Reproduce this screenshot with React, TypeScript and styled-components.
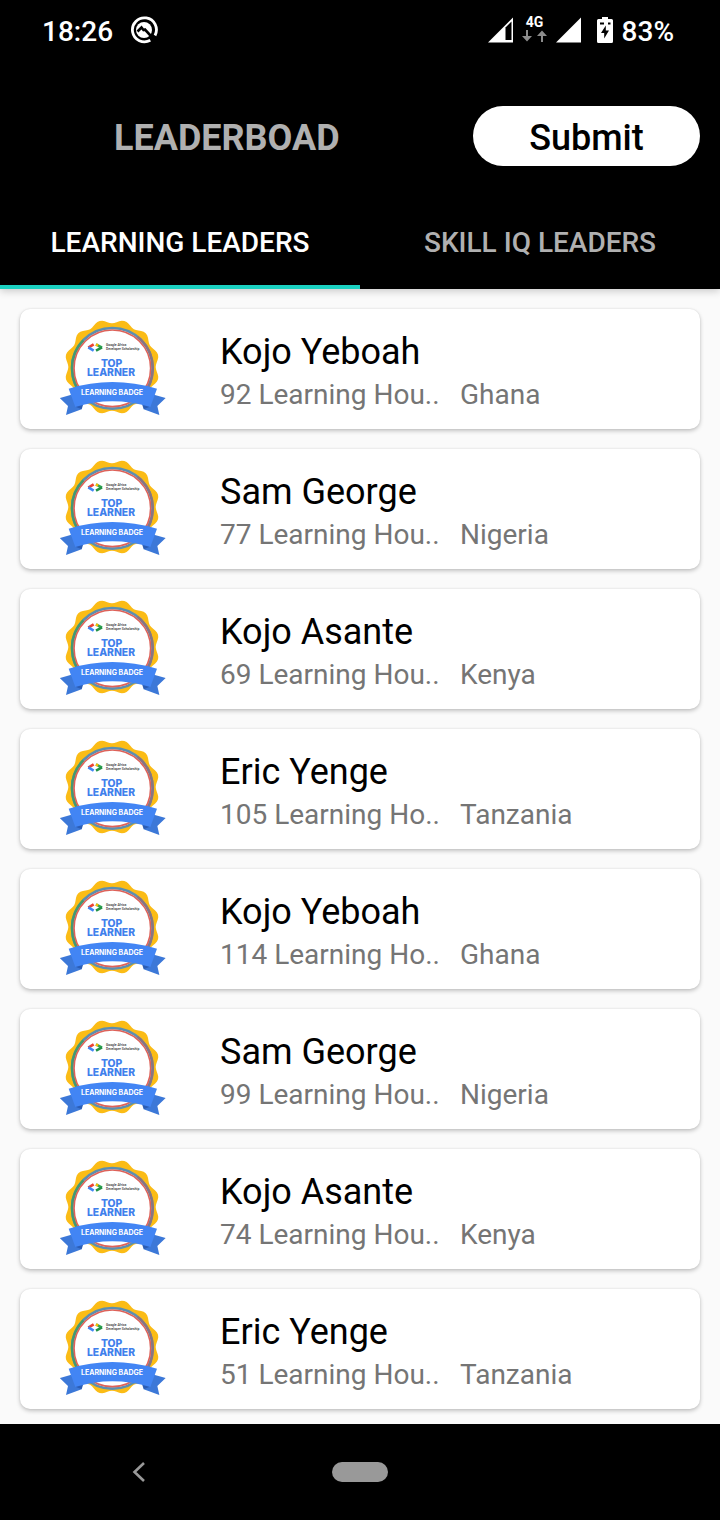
import React, { useState } from "react";
import styled, { createGlobalStyle } from "styled-components";

const GlobalStyle = createGlobalStyle`
  *, *::before, *::after { box-sizing: border-box; }
  body { margin: 0; background: #000; font-family: Roboto, "Liberation Sans", sans-serif; }
  button { font-family: inherit; border: 0; padding: 0; background: none; cursor: pointer; }
`;

const Screen = styled.div`
  min-height: 100vh;
  display: flex;
  flex-direction: column;
  background: #fafafa;
`;

const StatusBar = styled.div`
  display: flex;
  align-items: center;
  justify-content: space-between;
  height: 60px;
  padding: 0 46px 0 42px;
  background: #000;
  color: #fff;
`;

const StatusText = styled.span`
  padding-top: 4px;
  font-size: 28px;
  line-height: 32px;
  font-weight: 500;
`;

const StatusGroup = styled.div<{ $gap: number }>`
  display: flex;
  align-items: center;
  gap: ${({ $gap }) => $gap}px;
`;

const Network = styled.div`
  display: flex;
  flex-direction: column;
  align-items: center;
  width: 26px;
  padding-bottom: 4px;
  font-size: 14px;
  line-height: 16px;
  font-weight: 700;
`;

const BatteryLevel = styled.div`
  display: flex;
  align-items: center;
  gap: 9px;
  margin-left: 7px;
`;

const Header = styled.header`
  position: relative;
  background: #000;
  box-shadow: 0 2px 8px rgba(0, 0, 0, 0.2);
`;

const Toolbar = styled.div`
  display: flex;
  align-items: center;
  justify-content: space-between;
  height: 136px;
  padding: 16px 20px 0 114px;
`;

const Title = styled.h1`
  margin: 0;
  padding-top: 4px;
  color: #b0b0b0;
  font-size: 36px;
  line-height: 40px;
  font-weight: 700;
`;

const SubmitButton = styled.button`
  width: 227px;
  height: 60px;
  padding-top: 4px;
  border-radius: 30px;
  background: #fff;
  color: #000;
  font-size: 36px;
  line-height: 40px;
  font-weight: 500;
`;

const Tabs = styled.div`
  display: flex;
`;

const Tab = styled.button<{ $active: boolean }>`
  flex: 1;
  height: 93px;
  padding-top: 4px;
  border-bottom: 4px solid ${({ $active }) => ($active ? "#1bd1c1" : "#000")};
  color: ${({ $active }) => ($active ? "#fff" : "#b0b0b0")};
  font-size: 28px;
  line-height: 32px;
  font-weight: 500;
`;

const List = styled.ul`
  flex: 1;
  display: flex;
  flex-direction: column;
  gap: 20px;
  margin: 0;
  padding: 20px 20px 15px;
  list-style: none;
`;

const Card = styled.li`
  display: flex;
  align-items: center;
  gap: 54px;
  height: 120px;
  padding-left: 40px;
  border-radius: 10px;
  background: #fff;
  box-shadow: 0 2px 4px rgba(0, 0, 0, 0.22), 0 0 2px rgba(0, 0, 0, 0.1);
`;

const BadgeArt = styled.svg`
  flex: none;
  width: 106px;
  height: 98px;
  padding-bottom: 2px;
`;

const Info = styled.div`
  flex: 1;
  min-width: 0;
  padding-top: 4px;
`;

const Name = styled.h2`
  margin: 0;
  color: #000;
  font-size: 36px;
  line-height: 48px;
  font-weight: 400;
`;

const Details = styled.div`
  display: grid;
  grid-template-columns: 240px 1fr;
  color: #757575;
  font-size: 28px;
  line-height: 38px;
`;

const NavBar = styled.nav`
  display: grid;
  grid-template-columns: 1fr 56px 1fr;
  align-items: center;
  height: 96px;
  background: #000;
`;

const BackButton = styled.button`
  display: flex;
  justify-self: center;
  padding-right: 54px;
  box-sizing: content-box;
`;

const HomeButton = styled.button`
  height: 20px;
  border-radius: 10px;
  background: #999;
`;

const LOBES = 12;

function scallop(cx: number, cy: number, radius: number, depth: number) {
  const points: string[] = [];
  for (let deg = 0; deg < 360; deg += 3) {
    const a = (deg * Math.PI) / 180;
    const r = radius - depth * Math.cos(LOBES * a);
    points.push(`${(cx + r * Math.cos(a)).toFixed(1)},${(cy + r * Math.sin(a)).toFixed(1)}`);
  }
  return points.join(" ");
}

const SCALLOP = scallop(186, 171, 137, 6);

const Badge = () => (
  <BadgeArt viewBox="30 30 318 288" role="img" aria-label="Top learner badge">
    <polygon points={SCALLOP} fill="#fbbc16" />
    <circle cx="187" cy="175" r="121" fill="#fff" stroke="#5b8fb0" strokeWidth="8" />
    <path d="M116 272A121 121 0 0 1 100 91" fill="none" stroke="#429a72" strokeWidth="8" />
    <circle cx="187" cy="175" r="115" fill="none" stroke="#de6259" strokeWidth="5" />
    <path d="M262 80A121 121 0 0 1 262 270" fill="none" stroke="#8b7480" strokeWidth="7" />
    <g fill="none" strokeWidth="8">
      <path d="M131 103L115 113" stroke="#ea4335" />
      <path d="M115 112L131 122" stroke="#4285f4" />
      <path d="M138 103L156 113" stroke="#34a853" />
      <path d="M138 122L156 112" stroke="#229348" />
      <path d="M138 103L144 107" stroke="#fbbc04" />
    </g>
    <g fontFamily="Roboto, sans-serif" fill="#333" fontSize="10" fontWeight="500">
      <text x="168" y="109">Google Africa</text>
      <text x="168" y="121">Developer Scholarship</text>
    </g>
    <g
      fontFamily="Inter, sans-serif"
      fill="#3f80ec"
      fontSize="31"
      fontWeight="800"
      textAnchor="middle"
    >
      <text x="185" y="171">TOP</text>
      <text x="183" y="199">LEARNER</text>
    </g>
    <path d="M29 264L64 254L95 298L48 315L54 288Z" fill="#3c78d8" />
    <path d="M347 264L312 254L281 298L328 315L322 288Z" fill="#3c78d8" />
    <path d="M76 290L102 276L95 298Z" fill="#2b5db5" />
    <path d="M300 290L274 276L281 298Z" fill="#2b5db5" />
    <path d="M56 236Q186 196 321 236L301 291Q186 256 76 291Z" fill="#4285f4" />
    <text
      x="186"
      y="254"
      fill="#fff"
      fontFamily="Inter, sans-serif"
      fontSize="21"
      fontWeight="700"
      textAnchor="middle"
    >
      LEARNING BADGE
    </text>
  </BadgeArt>
);

const DebugIcon = () => (
  <svg width="28" height="28" viewBox="0 0 28 28" aria-hidden="true">
    <path d="M20.300 24.300A12 12 0 1 1 25 19.500" fill="none" stroke="#fff" strokeWidth="2.800" />
    <circle cx="14" cy="14" r="8" fill="#fff" />
    <path d="M7.500 15.500L11.500 11.500L13.500 14L15 13.500L25.500 25" fill="none" stroke="#000" strokeWidth="2.600" />
  </svg>
);

const SignalIcon = ({ partial = false }: { partial?: boolean }) => (
  <svg width="26" height="26" viewBox="0 0 26 26" aria-hidden="true">
    <path d="M0 25.500L25 0.500V25.500Z" fill="#fff" />
    {partial && <path d="M17.500 10.500L23.500 4.500V23H17.500Z" fill="#000" />}
  </svg>
);

const DataArrows = () => (
  <svg width="26" height="13" viewBox="0 0 26 13" fill="none" stroke="#8c8c8c" strokeWidth="2" aria-hidden="true">
    <path d="M5 0V9M20 12V3" />
    <path d="M0 6H10L5 11.500ZM15 6H25L20 0.500Z" fill="#8c8c8c" stroke="none" />
  </svg>
);

const BatteryIcon = () => (
  <svg width="16" height="26" viewBox="0 0 16 26" aria-hidden="true">
    <path d="M5 0H11V2H14.500Q16 2 16 3.500V24.500Q16 26 14.500 26H1.500Q0 26 0 24.500V3.500Q0 2 1.500 2H5Z" fill="#fff" />
    <path d="M8.800 8.500L4 16H7.200V21.500L12 13.500H8.800Z" fill="#000" />
    <path d="M3 6.500H7M11 6.500H13.500" stroke="#000" strokeWidth="2" />
  </svg>
);

const BackIcon = () => (
  <svg width="14" height="20" viewBox="0 0 14 20" aria-hidden="true">
    <path d="M12 1L2.500 10L12 19" fill="none" stroke="#999" strokeWidth="2.600" />
  </svg>
);

const leaders = [
  { name: "Kojo Yeboah", hours: "92 Learning Hou..", country: "Ghana" },
  { name: "Sam George", hours: "77 Learning Hou..", country: "Nigeria" },
  { name: "Kojo Asante", hours: "69 Learning Hou..", country: "Kenya" },
  { name: "Eric Yenge", hours: "105 Learning Ho..", country: "Tanzania" },
  { name: "Kojo Yeboah", hours: "114 Learning Ho..", country: "Ghana" },
  { name: "Sam George", hours: "99 Learning Hou..", country: "Nigeria" },
  { name: "Kojo Asante", hours: "74 Learning Hou..", country: "Kenya" },
  { name: "Eric Yenge", hours: "51 Learning Hou..", country: "Tanzania" },
];

const tabs = ["LEARNING LEADERS", "SKILL IQ LEADERS"];

export default function App() {
  const [active, setActive] = useState(0);

  return (
    <Screen>
      <GlobalStyle />
      <StatusBar>
        <StatusGroup $gap={17}>
          <StatusText>18:26</StatusText>
          <DebugIcon />
        </StatusGroup>
        <StatusGroup $gap={8}>
          <SignalIcon partial />
          <Network>
            4G
            <DataArrows />
          </Network>
          <SignalIcon />
          <BatteryLevel>
            <BatteryIcon />
            <StatusText>83%</StatusText>
          </BatteryLevel>
        </StatusGroup>
      </StatusBar>
      <Header>
        <Toolbar>
          <Title>LEADERBOAD</Title>
          <SubmitButton type="button">Submit</SubmitButton>
        </Toolbar>
        <Tabs role="tablist">
          {tabs.map((label, i) => (
            <Tab
              key={label}
              type="button"
              role="tab"
              aria-selected={active === i}
              $active={active === i}
              onClick={() => setActive(i)}
            >
              {label}
            </Tab>
          ))}
        </Tabs>
      </Header>
      <List>
        {leaders.map((leader, i) => (
          <Card key={i}>
            <Badge />
            <Info>
              <Name>{leader.name}</Name>
              <Details>
                <span>{leader.hours}</span>
                <span>{leader.country}</span>
              </Details>
            </Info>
          </Card>
        ))}
      </List>
      <NavBar>
        <BackButton type="button" aria-label="Back">
          <BackIcon />
        </BackButton>
        <HomeButton type="button" aria-label="Home" />
      </NavBar>
    </Screen>
  );
}
